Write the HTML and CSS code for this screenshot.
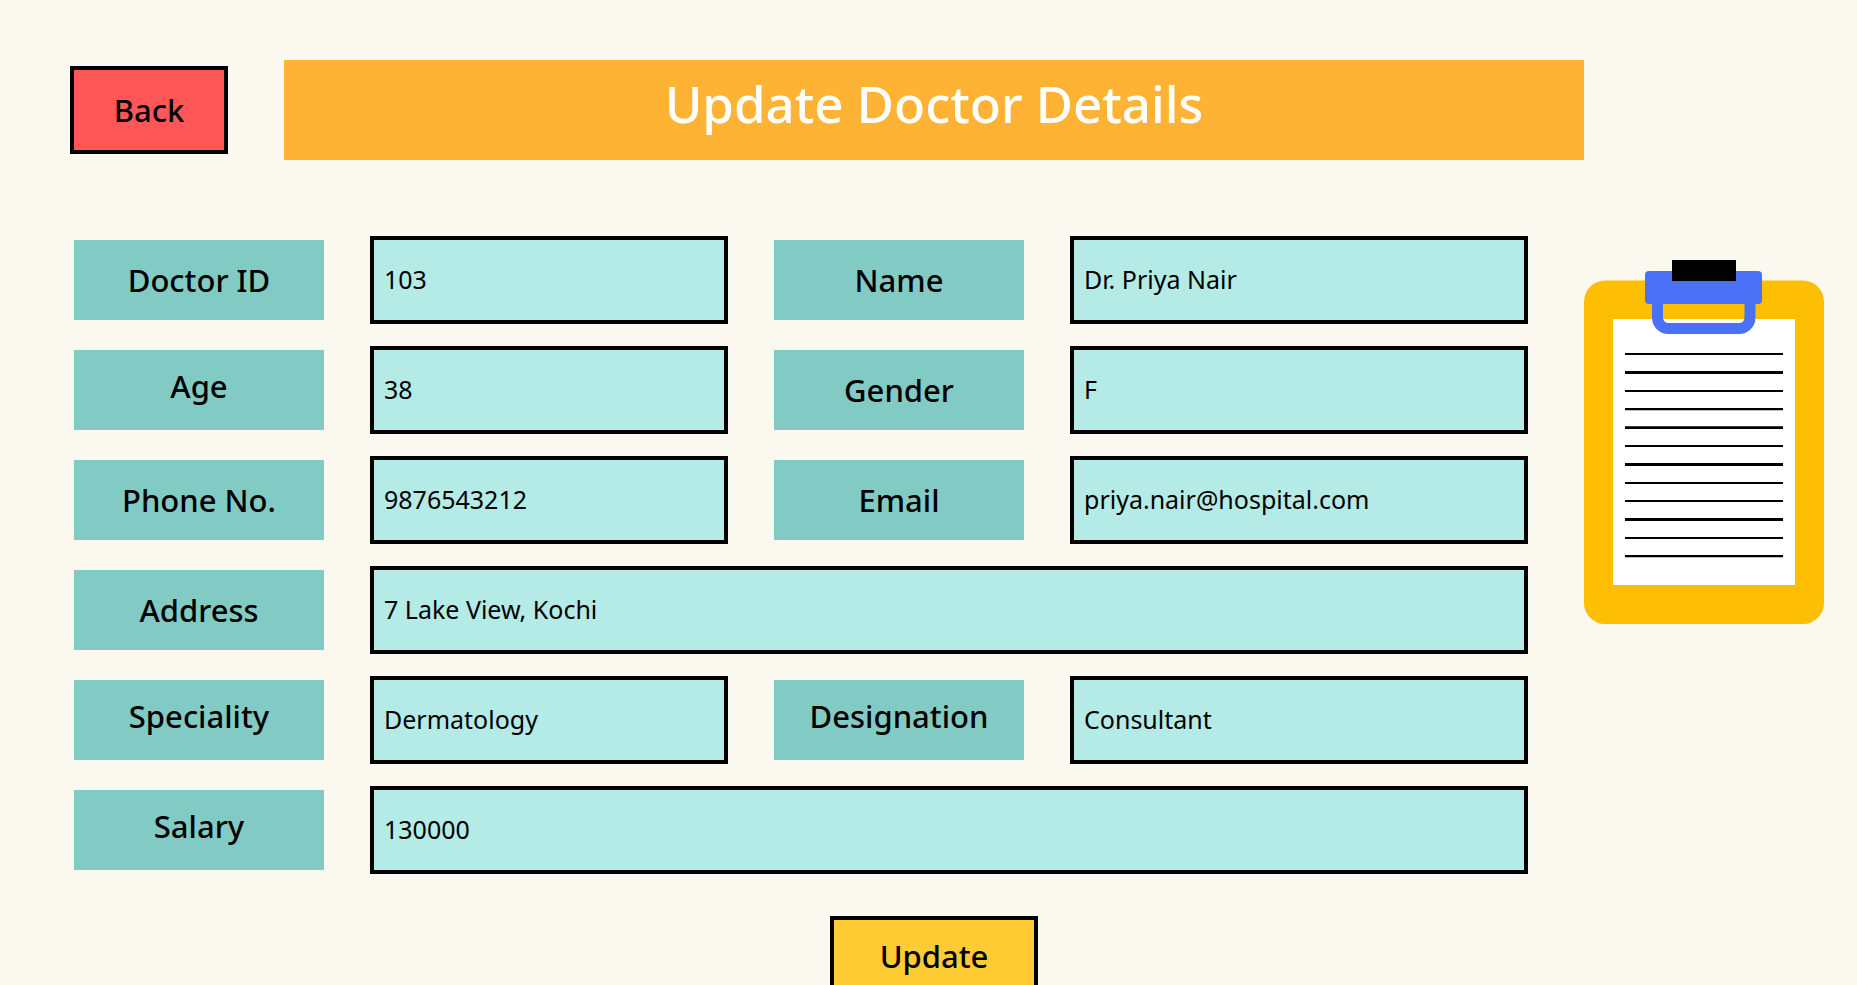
FILE: index.html
```html
<!DOCTYPE html>
<html lang="en">
<head>
<meta charset="utf-8">
<meta name="viewport" content="width=device-width, initial-scale=1">
<title>Update Doctor Details</title>
<link rel="stylesheet" href="styles.css">
</head>
<body>
<header class="page-header">
  <button class="button button-back" type="button">Back</button>
  <h1 class="page-title">Update Doctor Details</h1>
</header>
<main class="content">
  <form class="doctor-form">
    <div class="fields">
      <label class="field-label" for="doctor-id">Doctor ID</label>
      <input class="field-input" id="doctor-id" type="text" value="103">
      <label class="field-label" for="name">Name</label>
      <input class="field-input" id="name" type="text" value="Dr. Priya Nair">

      <label class="field-label field-label-raised" for="age">Age</label>
      <input class="field-input" id="age" type="text" value="38">
      <label class="field-label" for="gender">Gender</label>
      <input class="field-input" id="gender" type="text" value="F">

      <label class="field-label" for="phone">Phone No.</label>
      <input class="field-input" id="phone" type="text" value="9876543212">
      <label class="field-label" for="email">Email</label>
      <input class="field-input" id="email" type="text" value="priya.nair@hospital.com">

      <label class="field-label" for="address">Address</label>
      <input class="field-input field-input-wide" id="address" type="text" value="7 Lake View, Kochi">

      <label class="field-label field-label-raised" for="speciality">Speciality</label>
      <input class="field-input" id="speciality" type="text" value="Dermatology">
      <label class="field-label field-label-raised" for="designation">Designation</label>
      <input class="field-input" id="designation" type="text" value="Consultant">

      <label class="field-label field-label-raised" for="salary">Salary</label>
      <input class="field-input field-input-wide" id="salary" type="text" value="130000">
    </div>
    <div class="actions">
      <button class="button button-update" type="submit">Update</button>
    </div>
  </form>
  <svg class="clipboard" viewBox="0 0 240 364" aria-hidden="true">
    <rect x="0" y="20.5" width="240" height="343.5" rx="21" fill="#fdbe03"/>
    <rect x="29" y="59" width="182" height="266" fill="#fff"/>
    <path d="M73.5 40v17.500a11 11 0 0 0 11 11h70.500a11 11 0 0 0 11-11V40" fill="none" stroke="#4a70f5" stroke-width="11"/>
    <rect x="61" y="11" width="117" height="33" rx="4" fill="#4a70f5"/>
    <rect x="88" y="0" width="64" height="21"/>
    <path d="M41 93h158v2H41zM41 111h158v3H41zM41 130h158v2H41zM41 148h158v2.300H41zM41 166.200h158v2.800H41zM41 185h158v2H41zM41 203h158v3H41zM41 222h158v2H41zM41 240h158v2H41zM41 258h158v3H41zM41 277h158v2H41zM41 295h158v2.300H41z"/>
  </svg>
</main>
</body>
</html>
```

FILE: styles.css
```css
* {
  box-sizing: border-box;
}

body {
  margin: 0;
  background: #fbf8f0;
  color: #000;
  font-family: "Noto Sans", sans-serif;
}

.page-header {
  display: flex;
  align-items: center;
  gap: 56px;
  padding: 60px 273px 0 70px;
}

.page-title {
  flex: 1;
  height: 100px;
  margin: 0;
  padding-bottom: 14px;
  display: flex;
  align-items: center;
  justify-content: center;
  background: #ffb335;
  color: #fff;
  font-size: 51px;
  font-weight: 500;
  line-height: 70px;
}

.button {
  height: 88px;
  padding: 0;
  border: 4px solid #000;
  color: #000;
  font-family: inherit;
  font-size: 31px;
  font-weight: 550;
  cursor: pointer;
}

.button-back {
  width: 158px;
  background: #ff5757;
}

.button-update {
  width: 208px;
  padding-bottom: 8px;
  background: #ffcd33;
}

.content {
  display: flex;
  align-items: flex-start;
  gap: 56px;
  padding: 76px 33px 0 74px;
}

.doctor-form {
  flex: 1;
  min-width: 0;
}

.fields {
  display: grid;
  grid-template-columns: 250px minmax(0, 358fr) 250px minmax(0, 458fr);
  align-items: center;
  gap: 22px 46px;
}

.field-label {
  height: 80px;
  display: flex;
  align-items: center;
  justify-content: center;
  background: #81cbc4;
  font-size: 31px;
  font-weight: 550;
}

/* Lifts words with descenders so that they look centred */
.field-label-raised {
  padding-bottom: 8px;
}

.field-input {
  width: 100%;
  height: 88px;
  padding: 0 10px 2px;
  border: 4px solid #000;
  border-radius: 0;
  background: #b4ebe6;
  color: #000;
  font-family: inherit;
  font-size: 25px;
}

.field-input-wide {
  grid-column: span 3;
}

.actions {
  display: flex;
  justify-content: center;
  padding: 42px 0 0 266px;
}

.clipboard {
  flex: none;
  width: 240px;
  margin-top: 24px;
}
```
